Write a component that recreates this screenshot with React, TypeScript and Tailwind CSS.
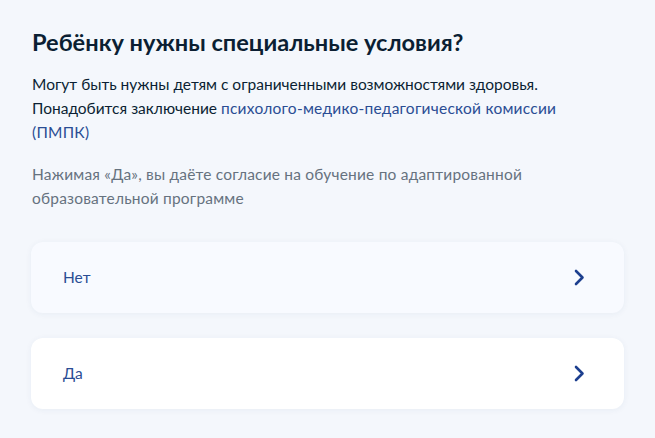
const options = [
  { id: "no", label: "Нет", bg: "bg-[#f8faff]" },
  { id: "yes", label: "Да", bg: "bg-white" },
];

// стрелка справа в карточке варианта
const Chevron = () => (
  <svg width="11" height="17" viewBox="0 0 11 17" fill="none" className="text-[#1d3f8f]">
    <path d="M2 2l6.5 6.5L2 15" stroke="currentColor" strokeWidth="2.6" strokeLinecap="round" strokeLinejoin="round" />
  </svg>
);

export default function App() {
  return (
    <div className="min-h-[438px] bg-[#f4f7fc] font-['Lato',sans-serif] text-[#0b1f33]">
      <div className="px-[32px] pt-[26px]">
        <h1 className="text-[23.6px] font-bold leading-[32px]">Ребёнку нужны специальные условия?</h1>
        <p className="mt-[14px] max-w-[560px] text-[15.5px] leading-[24px]">
          Могут быть нужны детям с ограниченными возможностями здоровья.
          <br />
          Понадобится заключение{" "}
          <a className="tracking-[0.25px] text-[#2a4d94]">психолого-медико-педагогической комиссии (ПМПК)</a>
        </p>
        <p className="mt-[18px] max-w-[520px] text-[15.5px] leading-[24px] tracking-[0.2px] text-[#66727f]">
          Нажимая «Да», вы даёте согласие на обучение по адаптированной образовательной программе
        </p>
      </div>
      <div className="mt-[32px] flex flex-col gap-[25px] px-[31px]">
        {options.map((o) => (
          <div
            key={o.id}
            className={`flex h-[71px] w-[593px] items-center justify-between rounded-[12px] ${o.bg} pl-[32px] pr-[39px] shadow-[0_1px_6px_rgba(30,60,120,0.06)]`}
          >
            <span className="text-[15.5px] text-[#2a4d94]">{o.label}</span>
            <Chevron />
          </div>
        ))}
      </div>
    </div>
  );
}
